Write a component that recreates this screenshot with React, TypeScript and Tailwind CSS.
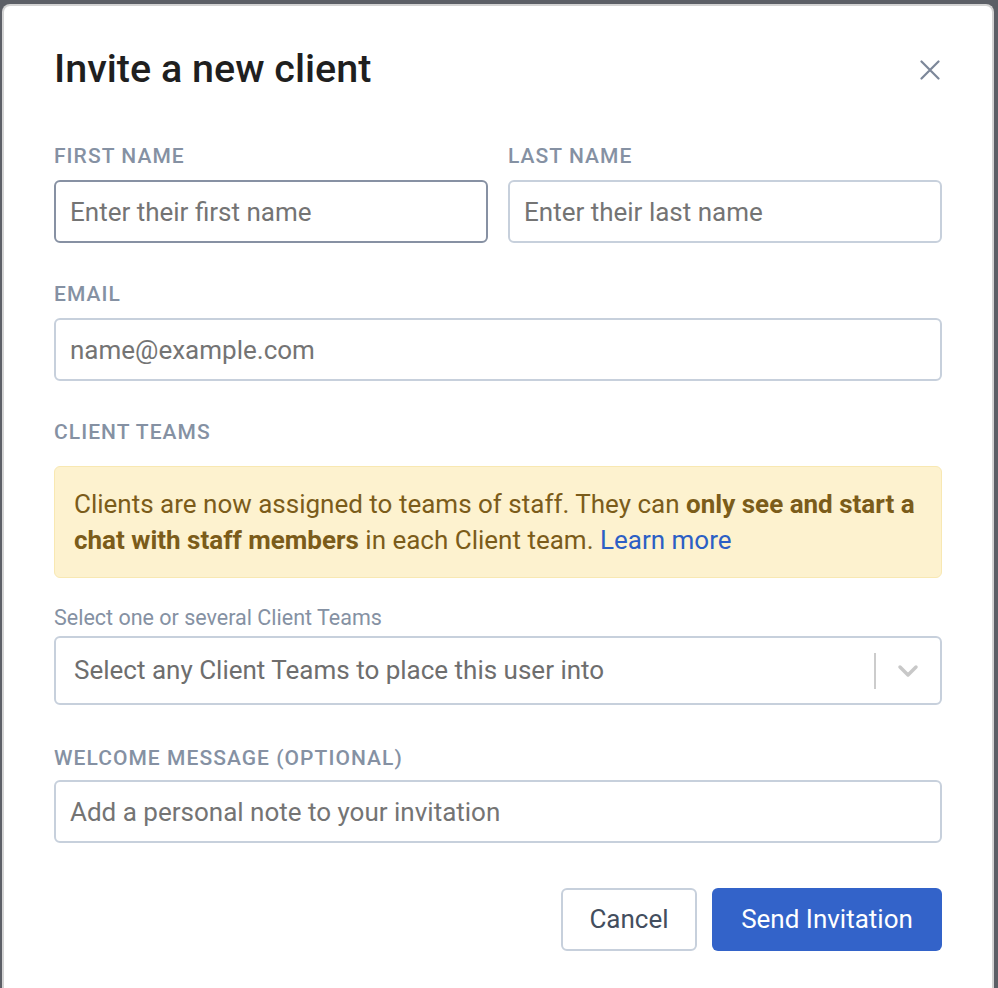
import React from "react"

const font = { fontFamily: "Roboto, 'Noto Sans', Arial, sans-serif" }

function Label({ children, className = "" }: { children: React.ReactNode; className?: string }) {
  return (
    <div className={`text-[21px] leading-[28px] font-medium uppercase tracking-[0.05em] text-[#8591a3] ${className}`}>
      {children}
    </div>
  )
}

function TextInput({ placeholder, focused = false }: { placeholder: string; focused?: boolean }) {
  return (
    <input
      type="text"
      placeholder={placeholder}
      className={`w-full h-[63px] rounded-[6px] border-2 bg-white px-[14px] text-[26px] text-[#333] placeholder:text-[#747474] outline-none ${
        focused ? "border-[#8791a3]" : "border-[#c7d0dc]"
      }`}
    />
  )
}

export default function App() {
  return (
    <div className="min-h-screen bg-[#5c5f66] pt-[4px] pl-[2px] pr-[4px]" style={font}>
      <div className="min-h-[984px] rounded-t-[8px] border-2 border-b-0 border-[#d3d3d3] bg-white px-[50px] pt-[39px] pb-[40px]">
        {/* Header */}
        <div className="flex items-center justify-between">
          <h1 className="text-[39.5px] leading-[48px] font-medium text-[#1f1f1f]">Invite a new client</h1>
          <button className="-mr-[2px] mt-[2px] p-1" aria-label="Close">
            <svg width="20" height="20" viewBox="0 0 20 20" fill="none" stroke="#7c8799" strokeWidth="2.2" strokeLinecap="round">
              <path d="M1.5 1.5l17 17M18.5 1.5l-17 17" />
            </svg>
          </button>
        </div>

        {/* Names */}
        <div className="mt-[49px] grid grid-cols-2 gap-5">
          <div>
            <Label className="mb-[10px]">First name</Label>
            <TextInput placeholder="Enter their first name" focused />
          </div>
          <div>
            <Label className="mb-[10px]">Last name</Label>
            <TextInput placeholder="Enter their last name" />
          </div>
        </div>

        {/* Email */}
        <div className="mt-[37px]">
          <Label className="mb-[10px]">Email</Label>
          <TextInput placeholder="name@example.com" />
        </div>

        {/* Client teams */}
        <div className="mt-[37px]">
          <Label className="mb-[20px]">Client teams</Label>
          <div className="rounded-[6px] border border-[#f8e8b2] bg-[#fdf2cf] px-[19px] py-[19px] text-[26px] leading-[36px] text-[#7b5c1a]">
            Clients are now assigned to teams of staff. They can{" "}
            <span className="font-bold">only see and start a chat with staff members</span> in each Client team.{" "}
            <a className="text-[#2c5fc5]" href="#">
              Learn more
            </a>
          </div>
          <div className="mt-[26px] mb-[4px] text-[21.5px] leading-[28px] text-[#8591a3]">
            Select one or several Client Teams
          </div>
          <div className="flex h-[69px] items-center rounded-[6px] border-2 border-[#c7d0dc] bg-white pl-[18px]">
            <span className="flex-1 text-[26px] text-[#6e6e6e]">Select any Client Teams to place this user into</span>
            <div className="h-[36px] w-[2px] bg-[#cccccc]" />
            <div className="flex w-[64px] justify-center">
              <svg width="22" height="14" viewBox="0 0 22 14" fill="none" stroke="#c8c8c8" strokeWidth="3.5" strokeLinecap="round" strokeLinejoin="round">
                <path d="M3 3l8 8 8-8" />
              </svg>
            </div>
          </div>
        </div>

        {/* Welcome message */}
        <div className="mt-[39px]">
          <Label className="mb-[8px]">Welcome message (optional)</Label>
          <TextInput placeholder="Add a personal note to your invitation" />
        </div>

        {/* Actions */}
        <div className="mt-[45px] flex justify-end gap-[15px]">
          <button className="h-[63px] w-[136px] rounded-[6px] border-2 border-[#c7d0dc] bg-white text-[26px] text-[#434e5e]">
            Cancel
          </button>
          <button className="h-[63px] w-[230px] rounded-[6px] bg-[#3363c9] text-[26px] text-white">
            Send Invitation
          </button>
        </div>
      </div>
    </div>
  )
}
